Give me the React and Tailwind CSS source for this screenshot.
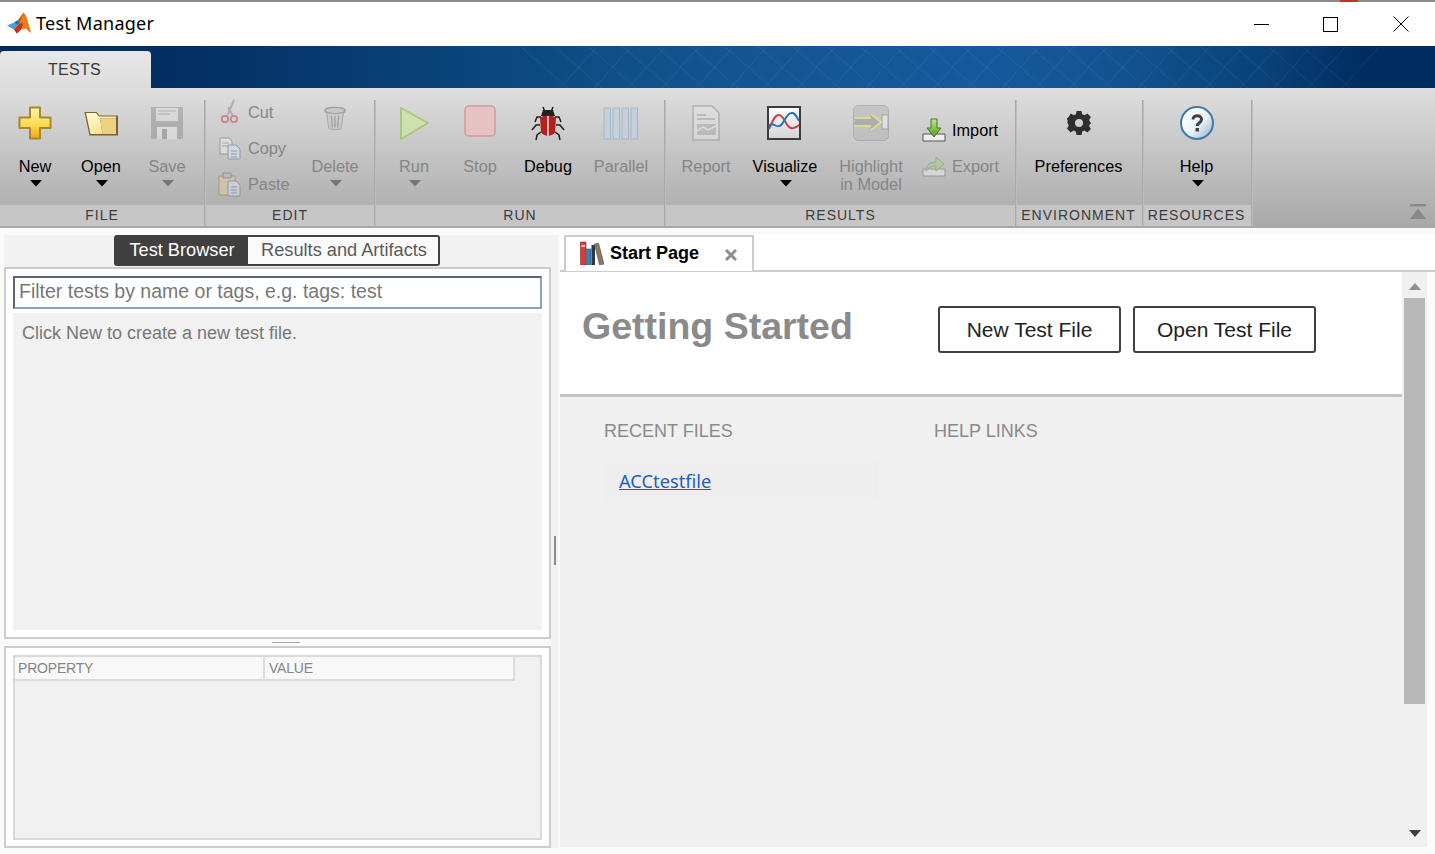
import React from "react";

const Arrow = ({ on }) => (
  <svg width="14" height="7" viewBox="0 0 14 7" className="block">
    <path d="M1 0h12L7 6.500z" fill={on ? "#000" : "#777"} />
  </svg>
);

const MatlabLogo = () => (
  <svg width="25" height="23" viewBox="0 0 25 23">
    <path d="M0 13.500 7 10.500l3.500 3L7 17.500z" fill="#4d9ed8" />
    <path d="M7 10.500 11 8l3 2-3.500 3.500z" fill="#1f6fb5" />
    <path d="M11 8 16.500 0.500 19 4l5 17-4.500-4-4-3.500z" fill="#d9561a" />
    <path d="M16.500 0.500c-1.500 5-2.500 9-6 13l-3.500 4 3 4 4-4 5.500-1 4.500 4L19 4z" fill="#e8801f" />
    <path d="M10 21.500l4-4 2-5-1-2-4.500 3L7 17.500z" fill="#c9321a" />
  </svg>
);

const PlusIcon = () => (
  <svg width="36" height="36" viewBox="0 0 36 36">
    <defs>
      <linearGradient id="plusG" x1="0" y1="0" x2="0" y2="1">
        <stop offset="0" stopColor="#fff6b0" />
        <stop offset="0.6" stopColor="#fbd84a" />
        <stop offset="1" stopColor="#e9a81c" />
      </linearGradient>
    </defs>
    <path d="M13 2.500h10v10h10.500v10.500H23v10.500H13V23H2.500V12.500H13z" fill="url(#plusG)" stroke="#a98628" strokeWidth="2" strokeLinejoin="round" />
  </svg>
);

const FolderIcon = () => (
  <svg width="36" height="36" viewBox="0 0 36 36">
    <defs>
      <linearGradient id="foldG" x1="0" y1="0" x2="1" y2="1">
        <stop offset="0" stopColor="#fffbd8" />
        <stop offset="1" stopColor="#f3dc7c" />
      </linearGradient>
    </defs>
    <path d="M1.500 7h12l3 3.500h18.500v20H6.500z" fill="#80612c" />
    <path d="M3 8h10l3 3.500h17v2H17l2.500 15.500H7.500z" fill="url(#foldG)" />
    <path d="M17 13.500h16V29H19.500z" fill="#ecd384" />
  </svg>
);

const SaveIcon = () => (
  <svg width="36" height="36" viewBox="0 0 36 36" className="opacity-40">
    <path d="M2 2h32v32H2z" fill="#7f7f7f" />
    <path d="M7 3h22v13H7z" fill="#e2e2e2" />
    <path d="M9 6h18M9 9h12" stroke="#9a9a9a" strokeWidth="1.500" />
    <path d="M8 22h20v12H8z" fill="#ededed" />
    <path d="M13 24h5v10h-5z" fill="#6f6f6f" />
  </svg>
);

const CutIcon = () => (
  <svg width="24" height="26" viewBox="0 0 24 26" className="opacity-50">
    <path d="M16 1 9.500 16M10 8l5 9" stroke="#8a8a8a" strokeWidth="2" fill="none" />
    <circle cx="7" cy="20" r="3.200" fill="none" stroke="#c23a3a" strokeWidth="1.800" />
    <circle cx="16" cy="20" r="3.200" fill="none" stroke="#c23a3a" strokeWidth="1.800" />
  </svg>
);

const CopyIcon = () => (
  <svg width="24" height="24" viewBox="0 0 24 24" className="opacity-50">
    <path d="M2 2h9l3 3v13H2z" fill="#eee" stroke="#777" />
    <path d="M4 7h7M4 10h7" stroke="#888" />
    <path d="M10 9h8l4 4v10H10z" fill="#dfe8f2" stroke="#5c7a9c" />
    <path d="M13 15h6M13 18h6M13 21h6" stroke="#5c7a9c" />
  </svg>
);

const PasteIcon = () => (
  <svg width="24" height="26" viewBox="0 0 24 26" className="opacity-50">
    <path d="M1 5h16v19H1z" fill="#e6cf9f" stroke="#96773c" />
    <path d="M5 2h8v5H5z" fill="#bbb" stroke="#666" />
    <path d="M10 10h8l4 4v11H10z" fill="#dfe8f2" stroke="#5c7a9c" />
    <path d="M13 16h6M13 19h6M13 22h6" stroke="#5c7a9c" />
  </svg>
);

const TrashIcon = () => (
  <svg width="24" height="25" viewBox="0 0 26 28" className="opacity-50 mb-[10px]">
    <ellipse cx="13" cy="5" rx="11.500" ry="3.500" fill="#bcbcbc" stroke="#666" strokeWidth="1.500" />
    <path d="M3.500 7 6 25c2 2 12 2 14 0l2.500-18c-3 2-16 2-19 0z" fill="#c4c4c4" stroke="#777" />
    <path d="M9 11l1 13M13 11v13M17 11l-1 13" stroke="#666" strokeWidth="1.300" />
  </svg>
);

const RunIcon = () => (
  <svg width="36" height="36" viewBox="0 0 36 36">
    <path d="M5 3 32 18 5 34z" fill="#cfe0ae" stroke="#a5c985" strokeWidth="2" strokeLinejoin="round" />
  </svg>
);

const StopIcon = () => (
  <svg width="36" height="36" viewBox="0 0 36 36">
    <rect x="3" y="1" width="30" height="30" rx="4" fill="#e7c2c4" stroke="#cf9a9c" strokeWidth="1.500" />
  </svg>
);

const BugIcon = () => (
  <svg width="36" height="36" viewBox="0 0 36 36">
    <g stroke="#1d1d1d" strokeWidth="1.500" fill="none">
      <path d="M13 2l2 5M23 2l-2 5M11 12H7l-2 5M25 12h4l2 5M10 20H6l-4 5M26 20h4l4 5M11 27l-4 3-1 5M25 27l4 3 1 5" />
    </g>
    <path d="M13 5h10l2 6H11z" fill="#222" />
    <path d="M10 13c1-3 15-3 16 0l-1 14c-2 5-12 5-14 0z" fill="#b3201d" />
    <path d="M17 11h2v20h-2z" fill="#e6b5b0" />
  </svg>
);

const ParallelIcon = () => (
  <svg width="36" height="36" viewBox="0 0 36 36">
    {[1, 10, 19, 28].map((x) => (
      <rect key={x} x={x} y="3" width="6.500" height="31" fill="#c4d0dc" stroke="#a6b6c6" />
    ))}
  </svg>
);

const ReportIcon = () => (
  <svg width="30" height="36" viewBox="0 0 30 36" className="opacity-50">
    <path d="M2 1h19l7 7v27H2z" fill="#e4e4e4" stroke="#8e8e8e" strokeWidth="1.500" />
    <path d="M6 10h9M6 14h18" stroke="#8e8e8e" strokeWidth="1.500" />
    <path d="M6 19h19v11H6z" fill="#a9a9a9" />
    <path d="M6 26l6-4 5 3 8-4" stroke="#eee" strokeWidth="1.500" fill="none" />
  </svg>
);

const VisualizeIcon = () => (
  <svg width="34" height="34" viewBox="0 0 34 34" className="mr-[3px]">
    <defs>
      <linearGradient id="visG" x1="0" y1="0" x2="0" y2="1">
        <stop offset="0" stopColor="#ffffff" />
        <stop offset="1" stopColor="#d4d4d4" />
      </linearGradient>
    </defs>
    <rect x="1" y="1" width="32" height="32" fill="url(#visG)" stroke="#3c3c3c" strokeWidth="2" />
    <path d="M2 23C5 17 7 9 12 9c5 0 7 12 12 13 4 1 6-1 8-3" stroke="#c9423a" strokeWidth="2" fill="none" />
    <path d="M2 20C7 14 9 25 15 18c4-6 6-12 11-11 3 1 4 5 6 8" stroke="#2f6fc0" strokeWidth="2" fill="none" />
  </svg>
);

const HighlightIcon = () => (
  <svg width="36" height="36" viewBox="0 0 36 36" className="opacity-50">
    <rect x="0.500" y="0.500" width="35" height="35" rx="5" fill="#b5b5b5" stroke="#8e8e8e" />
    <rect x="29" y="10" width="6" height="14" fill="#eee" stroke="#777" />
    <path d="M2 14h16l-1-5 11 8-11 8 1-5H2z" fill="#8a8a8a" />
    <path d="M2 13h16M2 21h16M18 9l10 8-10 8" stroke="#f0e15a" strokeWidth="2" fill="none" />
  </svg>
);

const ImportIcon = () => (
  <svg width="24" height="24" viewBox="0 0 24 24">
    <defs>
      <linearGradient id="impG" x1="0" y1="0" x2="0" y2="1">
        <stop offset="0" stopColor="#c6e88a" />
        <stop offset="1" stopColor="#4f9a22" />
      </linearGradient>
    </defs>
    <path d="M1 16h22v7H1z" fill="#eee" stroke="#555" />
    <path d="M9 1h6v9h4l-7 9-7-9h4z" fill="url(#impG)" stroke="#3e7d1b" />
  </svg>
);

const ExportIcon = () => (
  <svg width="24" height="24" viewBox="0 0 24 24" className="opacity-50">
    <path d="M1 15h22v7H1z" fill="#eee" stroke="#777" />
    <path d="M4 17c0-6 4-9 10-9V3l8 7-8 7v-5c-5 0-8 2-10 5z" fill="#a8cf8c" stroke="#6c9a50" />
  </svg>
);

const GearIcon = () => (
  <svg width="24" height="24" viewBox="0 0 24 24">
    <path
      fillRule="evenodd"
      fill="#2e2e2e"
      d="M9.500 0h5l.7 3.300 2.300 1 2.900-1.800 3.500 3.500-1.800 2.900 1 2.300 3.300.7v0l-3.300.8-1 2.300 1.800 2.900-3.500 3.500-2.900-1.800-2.300 1-.7 3.300h-5l-.7-3.300-2.300-1-2.900 1.800L0 17.400l1.800-2.900-1-2.300L0 12l.8-2.100-1-2.300L1.600 6l2.200-3.500 2.900 1.800 2.300-1zM12 8a4 4 0 1 0 0 8 4 4 0 0 0 0-8z"
    />
  </svg>
);

const HelpIcon = () => (
  <svg width="36" height="36" viewBox="0 0 36 36">
    <defs>
      <linearGradient id="helpG" x1="0" y1="0" x2="1" y2="1">
        <stop offset="0" stopColor="#ffffff" />
        <stop offset="0.55" stopColor="#eef3f8" />
        <stop offset="1" stopColor="#88aac8" />
      </linearGradient>
    </defs>
    <circle cx="18" cy="18" r="16" fill="url(#helpG)" stroke="#3f7aa6" strokeWidth="2" />
    <path d="M14 14.500c0-5 8.500-5 8.500 0 0 3.500-4.300 3.500-4.300 6.500" fill="none" stroke="#3a4148" strokeWidth="3" />
    <rect x="16.500" y="23" width="3.500" height="3.500" fill="#3a4148" />
  </svg>
);

const BooksIcon = () => (
  <svg width="24" height="24" viewBox="0 0 24 24">
    <rect x="0.500" y="1" width="5.500" height="23" fill="#d63c3c" stroke="#9c2525" strokeWidth="0.600" />
    <rect x="1.500" y="4" width="3.500" height="2" fill="#f5c5c5" />
    <rect x="6.500" y="8" width="4.500" height="16" fill="#3f7eae" stroke="#23567d" strokeWidth="0.600" />
    <rect x="11.500" y="4" width="3.500" height="20" fill="#2c3a46" />
    <path d="M14.500 3l4-1 5.500 21-4.500 1z" fill="#8b7864" stroke="#5d5043" strokeWidth="0.600" />
  </svg>
);

const ToolButton = ({ w, label, on, arrow, icon }) => (
  <div className={`${w} flex flex-col items-center shrink-0`}>
    <div className="h-[36px] mt-[17px] flex items-center justify-center">{icon}</div>
    <div className={`mt-[16px] text-[16.300px] leading-[18px] text-center whitespace-pre ${on ? "text-black" : "text-[#858585]"}`}>{label}</div>
    {arrow && <div className="mt-[5px] ml-[2px]"><Arrow on={on} /></div>}
  </div>
);

const SmallRow = ({ icon, label, on }) => (
  <div className="h-[36px] flex items-center">
    <div className="w-[24px] flex justify-center shrink-0">{icon}</div>
    <span className={`ml-[6px] text-[16.300px] ${on ? "text-black" : "text-[#858585]"}`}>{label}</span>
  </div>
);

const Section = ({ w, label, tail, children }) => (
  <div className={`${w} shrink-0 flex flex-col h-[138px]`}>
    <div className={`h-[117px] flex ${tail || ""}`}>{children}</div>
    <div className={`h-[21px] bg-[#c6c6c6] flex items-center justify-center text-[14px] tracking-[1px] text-[#3c3c3c] ${tail || ""}`}>{label}</div>
  </div>
);

const Sep = () => (
  <div className="w-[2px] h-[126px] mt-[12px] shrink-0 bg-[#bdbdbd] border-l border-[#a9a9a9]" />
);

const BlueBar = () => {
  const lines = [];
  for (let i = 0; i < 24; i++) {
    const x = 560 + i * 34;
    lines.push(<path key={`a${i}`} d={`M${x} 42L${x + 38} 0`} />);
    lines.push(<path key={`b${i}`} d={`M${x - 40} 0L${x + 8} 42`} />);
  }
  return (
    <div className="relative h-[42px] bg-[linear-gradient(90deg,#022c5c_0%,#022f62_12%,#0a4278_30%,#12548f_48%,#165a9e_68%,#125391_78%,#0a4279_88%,#002e60_95%,#012e60_100%)]">
      <svg className="absolute inset-0" width="1435" height="42">
        <g stroke="#ffffff" strokeOpacity="0.07" fill="none">{lines}</g>
      </svg>
      <div className="absolute left-0 top-[5px] w-[151px] h-[37px] rounded-t-[4px] bg-[linear-gradient(180deg,#e8e8e8,#dcdcdc)] flex items-center justify-center text-[16px] tracking-[0.3px] text-[#3a3a3a] pr-[2px]">
        TESTS
      </div>
    </div>
  );
};

export default function App() {
  return (
    <div className="w-[1435px] h-[854px] overflow-hidden bg-[#fafafa] font-['Liberation_Sans',Arial,sans-serif] flex flex-col relative">
      {/* title bar */}
      <div className="relative h-[2px] bg-[#8a8a8a]">
        <div className="absolute left-[1340px] top-0 w-[18px] h-[2px] bg-[#c4302b]" />
      </div>
      <div className="h-[44px] bg-white flex items-center shrink-0">
        <div className="ml-[7px] w-[25px] mt-[-2px]"><MatlabLogo /></div>
        <span className="ml-[4px] text-[18px] mt-[-1px] text-black font-['Noto_Sans',sans-serif] tracking-[0.27px]">Test Manager</span>
        <div className="ml-auto flex items-center">
          <div className="w-[15px] h-[1px] bg-black mr-[54px]" />
          <div className="w-[15px] h-[15px] border border-black mr-[55px]" />
          <svg width="16" height="16" viewBox="0 0 16 16" className="mr-[26px]">
            <path d="M0.500 0.500l15 15M15.500 0.500l-15 15" stroke="#000" strokeWidth="1" />
          </svg>
        </div>
      </div>
      <BlueBar />

      {/* toolstrip */}
      <div className="h-[140px] shrink-0 flex bg-[linear-gradient(180deg,#dedede_0%,#b0b0b0_84%,#a8a8a8_100%)] relative">
        <Section w="w-[204px]" label="FILE">
          <div className="w-[2px]" />
          <ToolButton w="w-[66px]" label="New" on arrow icon={<PlusIcon />} />
          <ToolButton w="w-[66px]" label="Open" on arrow icon={<FolderIcon />} />
          <ToolButton w="w-[66px]" label="Save" arrow icon={<SaveIcon />} />
        </Section>
        <Sep />
        <Section w="w-[168px]" label="EDIT">
          <div className="w-[90px] pl-[12px] pt-[6px] shrink-0">
            <SmallRow label="Cut" icon={<CutIcon />} />
            <SmallRow label="Copy" icon={<CopyIcon />} />
            <SmallRow label="Paste" icon={<PasteIcon />} />
          </div>
          <ToolButton w="w-[78px]" label="Delete" arrow icon={<TrashIcon />} />
        </Section>
        <Sep />
        <Section w="w-[288px]" label="RUN">
          <ToolButton w="w-[76px]" label="Run" arrow icon={<RunIcon />} />
          <ToolButton w="w-[56px]" label="Stop" icon={<StopIcon />} />
          <ToolButton w="w-[80px]" label="Debug" on icon={<BugIcon />} />
          <ToolButton w="w-[66px]" label="Parallel" icon={<ParallelIcon />} />
        </Section>
        <Sep />
        <Section w="w-[349px]" label="RESULTS">
          <ToolButton w="w-[80px]" label="Report" icon={<ReportIcon />} />
          <ToolButton w="w-[78px]" label="Visualize" on arrow icon={<VisualizeIcon />} />
          <ToolButton w="w-[94px]" label={"Highlight\nin Model"} icon={<HighlightIcon />} />
          <div className="pl-[4px] pt-[24px]">
            <SmallRow label="Import" on icon={<ImportIcon />} />
            <SmallRow label="Export" icon={<ExportIcon />} />
          </div>
        </Section>
        <Sep />
        <Section w="w-[125px]" label="ENVIRONMENT" tail="pr-[2px]">
          <ToolButton w="w-[123px]" label="Preferences" on icon={<GearIcon />} />
        </Section>
        <Sep />
        <Section w="w-[107px]" label="RESOURCES" tail="pr-[2px]">
          <ToolButton w="w-[105px]" label="Help" on arrow icon={<HelpIcon />} />
        </Section>
        <Sep />
        <div className="flex-1 flex justify-end items-start pt-[116px] pr-[9px]">
          <svg width="16" height="16" viewBox="0 0 16 16">
            <path d="M0 0h16v2.500H0z" fill="#8a8a8a" />
            <path d="M8 4.500l8 10.500H0z" fill="#8a8a8a" />
          </svg>
        </div>
      </div>

      {/* body */}
      <div className="flex flex-1 min-h-0 pt-[7px]">
        {/* left */}
        <div className="w-[558px] ml-[4px] mr-[-4px] shrink-0 flex flex-col">
          <div className="w-[554px] h-[32px] bg-[#f2f2f2] shrink-0 flex pl-[110px]">
            <div className="w-[134px] h-[31px] pt-[1px] pl-[2px] bg-[#404040] rounded-l-[3px] flex items-center justify-center text-white text-[18.200px]">Test Browser</div>
            <div className="w-[192px] h-[31px] pt-[1px] pl-[2px] bg-[#fafafa] border-2 border-l-0 border-[#404040] rounded-r-[3px] flex items-center justify-center text-[#5a5a5a] text-[18.200px]">Results and Artifacts</div>
          </div>
          <div className="flex flex-1 min-h-0">
            <div className="w-[547px] flex flex-col shrink-0">
              <div className="h-[372px] border-2 border-[#cccccc] bg-white px-[7px] pt-[7px] shrink-0 flex flex-col">
                <div className="h-[33px] shrink-0 border-2 border-t-[#5a6678] border-l-[#5a6678] border-r-[#8fa3b8] border-b-[#8fa3b8] bg-white flex items-center pl-[4px] pb-[1px] text-[19.500px] text-[#777777]">
                  Filter tests by name or tags, e.g. tags: test
                </div>
                <div className="mt-[4px] flex-1 bg-[#f1f1f1] pl-[9px] pt-[10px] text-[18px] leading-[21px] text-[#777777]">
                  Click New to create a new test file.
                </div>
                <div className="h-[7px] shrink-0" />
              </div>
              <div className="h-[7px] shrink-0 flex items-center justify-center">
                <div className="w-[28px] h-[1px] bg-[#a8a8a8] ml-[16px]" />
              </div>
              <div className="h-[202px] shrink-0 border-2 border-[#cccccc] bg-white px-[7px] pt-[7px] pb-[6px]">
                <div className="h-full border-2 border-[#d9d9d9] bg-[#f1f1f1] flex flex-col">
                  <div className="h-[24px] flex shrink-0 text-[14px] text-[#858585] tracking-[-0.2px]">
                    <div className="w-[250px] bg-[#f8f8f8] border-b-2 border-r-2 border-[#dcdcdc] pl-[3px] flex items-center">PROPERTY</div>
                    <div className="w-[250px] bg-[#f8f8f8] border-b-2 border-r-2 border-[#dcdcdc] pl-[4px] flex items-center">VALUE</div>
                  </div>
                </div>
              </div>
            </div>
            <div className="w-[7px] h-[581px] bg-[#f2f2f2] shrink-0 flex items-center justify-center">
              <div className="w-[2px] h-[29px] bg-[#8a8a8a] mt-[-14px]" />
            </div>
          </div>
        </div>

        {/* right */}
        <div className="flex-1 ml-[2px] flex flex-col min-w-0">
          <div className="h-[37px] shrink-0 border-b-2 border-[#cccccc] pl-[4px] bg-white">
            <div className="w-[190px] h-[36px] border-2 border-b-0 border-[#cccccc] bg-white flex items-center pl-[14px] pb-[2px]">
              <BooksIcon />
              <span className="ml-[6px] text-[18px] font-bold text-black">Start Page</span>
              <svg width="12" height="12" viewBox="0 0 12 12" className="ml-[26px] mt-[3px]">
                <path d="M1 1l10 10M11 1L1 11" stroke="#8f8f8f" strokeWidth="3" />
              </svg>
            </div>
          </div>
          <div className="flex flex-1 min-h-0 h-[575px]">
            <div className="w-[842px] h-[575px] shrink-0 flex flex-col bg-[#f0f0f0]">
              <div className="h-[125px] bg-white border-b-[3px] border-[#c8c0c0] shrink-0 flex items-start">
                <div className="ml-[22px] mt-[32px] text-[37.500px] leading-[44px] font-bold text-[#8a8a8a] w-[356px]">Getting Started</div>
                <button className="mt-[34px] w-[183px] h-[47px] border-2 border-[#404040] rounded-[3px] bg-white text-[21px] text-[#222]">New Test File</button>
                <button className="mt-[34px] ml-[12px] w-[183px] h-[47px] border-2 border-[#404040] rounded-[3px] bg-white text-[21px] text-[#222]">Open Test File</button>
              </div>
              <div className="flex pl-[44px] pt-[24px]">
                <div className="w-[330px]">
                  <div className="text-[18px] leading-[21px] text-[#8a8a8a]">RECENT FILES</div>
                  <div className="mt-[20px] w-[275px] h-[40px] bg-[#eeeeee] flex items-center pl-[15px] pb-[2px]">
                    <a className="text-[18.300px] text-[#1f5fbf] underline font-['Noto_Sans',sans-serif]">ACCtestfile</a>
                  </div>
                </div>
                <div className="text-[18px] leading-[21px] text-[#8a8a8a]">HELP LINKS</div>
              </div>
            </div>
            <div className="w-[25px] h-[575px] shrink-0 bg-[#f0f0f0] flex flex-col items-center">
              <svg width="12" height="7" viewBox="0 0 12 7" className="mt-[11px]"><path d="M6 0l6 7H0z" fill="#8f8f8f" /></svg>
              <div className="mt-[8px] w-[21px] h-[406px] bg-[#b8b8b8]" />
              <svg width="12" height="7" viewBox="0 0 12 7" className="mt-[126px]"><path d="M0 0h12L6 7z" fill="#404040" /></svg>
            </div>
          </div>
        </div>
      </div>
    </div>
  );
}
